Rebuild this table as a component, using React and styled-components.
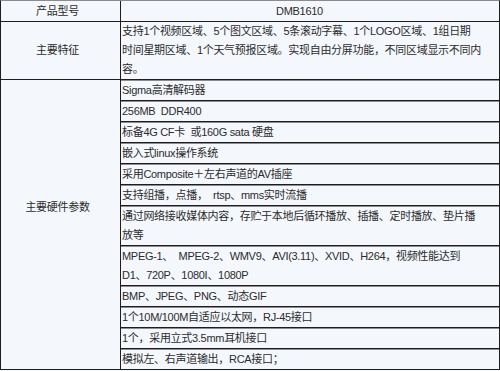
import React from "react";
import styled, { createGlobalStyle } from "styled-components";

const GlobalStyle = createGlobalStyle`
  html, body {
    margin: 0;
    padding: 0;
    background: #f4f8fd;
  }
  body {
    font-family: "Liberation Sans", Arial, "Noto Sans CJK SC", sans-serif;
    font-size: 11px;
    letter-spacing: -0.3px;
    color: #2b2b2b;
  }
`;

const Sheet = styled.div`
  display: grid;
  grid-template-columns: 120px 1fr;
  width: 500px;
  box-sizing: border-box;
  border: 1px solid #1e1e1e;
  border-top-color: #8c8c8c;
  background: #f4f8fd;
`;

const Label = styled.div`
  display: flex;
  align-items: center;
  justify-content: center;
  padding-right: 6px;
  padding-bottom: ${(p) => p.$lift || 0}px;
  border-right: 1px solid #1e1e1e;
  border-bottom: ${(p) => (p.$last ? "none" : "1px solid #1e1e1e")};
  line-height: 19px;
`;

const Value = styled.div`
  padding-left: 1px;
  line-height: ${(p) => p.$lh || 19}px;
  height: ${(p) => p.$h}px;
  text-align: ${(p) => (p.$center ? "center" : "left")};
  padding-right: ${(p) => (p.$center ? 22 : 0)}px;
  border-bottom: 1px solid #1e1e1e;
`;

const List = styled.div`
  display: flex;
  flex-direction: column;
`;

const Item = styled.div`
  padding-left: 1px;
  line-height: 19px;
  border-top: 1px solid #8c8c8c;
  border-bottom: ${(p) => (p.$last ? "none" : "1px solid #1e1e1e")};
  white-space: pre;
`;

const hardware = [
  ["Sigma高清解码器"],
  ["256MB  DDR400"],
  ["标备4G CF卡  或160G sata 硬盘"],
  ["嵌入式linux操作系统"],
  ["采用Composite＋左右声道的AV插座"],
  ["支持组播，点播，  rtsp、mms实时流播"],
  ["通过网络接收媒体内容，存贮于本地后循环播放、插播、定时播放、垫片播", "放等"],
  ["MPEG-1、  MPEG-2、WMV9、AVI(3.11)、XVID、H264，视频性能达到", "D1、720P、1080I、1080P"],
  ["BMP、JPEG、PNG、动态GIF"],
  ["1个10M/100M自适应以太网，RJ-45接口"],
  ["1个，采用立式3.5mm耳机接口"],
  ["模拟左、右声道输出，RCA接口；"],
];

export default function App() {
  return (
    <>
      <GlobalStyle />
      <Sheet>
        <Label>产品型号</Label>
        <Value $center $h={20} $lh={20}>DMB1610</Value>

        <Label>主要特征</Label>
        <Value $h={57}>
          支持1个视频区域、5个图文区域、5条滚动字幕、1个LOGO区域、1组日期
          <br />
          时间星期区域、1个天气预报区域。实现自由分屏功能，不同区域显示不同内
          <br />
          容。
        </Value>

        <Label $last $lift={34}>主要硬件参数</Label>
        <List>
          {hardware.map((lines, i) => (
            <Item key={i} $last={i === hardware.length - 1}>
              {lines.map((l, j) => (
                <React.Fragment key={j}>
                  {j > 0 && <br />}
                  {l}
                </React.Fragment>
              ))}
            </Item>
          ))}
        </List>
      </Sheet>
    </>
  );
}
